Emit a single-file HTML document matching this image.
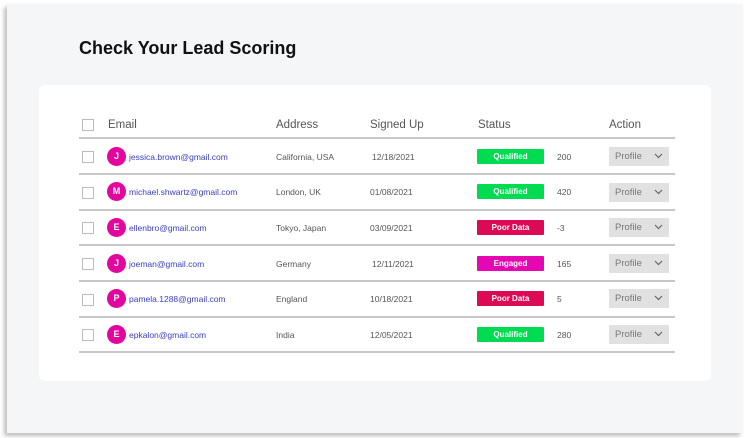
<!DOCTYPE html>
<html><head><style>
*{margin:0;padding:0;box-sizing:border-box}
body{width:750px;height:438px;background:#fff;position:relative;overflow:hidden;font-family:"Liberation Sans",sans-serif}
.panel{position:absolute;left:7px;top:4px;width:736px;height:429px;background:#f5f6f8;box-shadow:-3px 3px 4px rgba(0,0,0,.25)}
h1{position:absolute;left:79px;top:38px;font-size:18px;font-weight:bold;color:#111}
.card{position:absolute;left:39px;top:85px;width:672px;height:296px;background:#fff;border-radius:6px}
.line{position:absolute;left:79px;width:596px;height:2px;background:#c8c8c8}
.cb{position:absolute;left:82px;width:12px;height:12px;border:1px solid #bbb;background:#fff}
.hd{position:absolute;top:119px;font-size:11.5px;color:#555}
.av{position:absolute;left:107px;width:19px;height:19px;border-radius:50%;background:#e3069e;color:#fff;font-size:9px;font-weight:bold;text-align:center;line-height:19px}
.em{position:absolute;left:129px;font-size:8.5px;color:#3a3fc0}
.tx{position:absolute;font-size:8.5px;color:#555}
.bd{position:absolute;left:477px;width:67px;height:15px;color:#fff;font-size:8px;font-weight:bold;text-align:center;line-height:15px;border-radius:1px}
.pf{position:absolute;left:609px;width:60px;height:19px;background:#e1e1e1;font-size:9.5px;color:#777;line-height:19px;padding-left:6px}
.pf svg{position:absolute;right:6px;top:6px}
</style></head><body>
<div class="panel"></div>
<h1>Check Your Lead Scoring</h1>
<div class="card"></div>
<div class="cb" style="top:119px"></div>
<div class="hd" style="left:108px">Email</div>
<div class="hd" style="left:276px">Address</div>
<div class="hd" style="left:370px">Signed Up</div>
<div class="hd" style="left:478px">Status</div>
<div class="hd" style="left:609px">Action</div>
<div class="line" style="top:137px"></div>

<div class="cb" style="top:151px"></div><div class="av" style="top:147px">J</div><div class="em" style="top:152px">jessica.brown@gmail.com</div><div class="tx" style="left:276px;top:152px">California, USA</div><div class="tx" style="left:372px;top:152px">12/18/2021</div><div class="bd" style="top:149px;background:#00dc52">Qualified</div><div class="tx" style="left:557px;top:152px">200</div><div class="pf" style="top:147px">Profile<svg width="9" height="6"><path d="M1 1L4.5 4.5L8 1" stroke="#666" stroke-width="1.2" fill="none"/></svg></div>
<div class="line" style="top:173px"></div>

<div class="cb" style="top:187px"></div><div class="av" style="top:182px">M</div><div class="em" style="top:187px">michael.shwartz@gmail.com</div><div class="tx" style="left:276px;top:187px">London, UK</div><div class="tx" style="left:370px;top:187px">01/08/2021</div><div class="bd" style="top:184px;background:#00dc52">Qualified</div><div class="tx" style="left:557px;top:187px">420</div><div class="pf" style="top:183px">Profile<svg width="9" height="6"><path d="M1 1L4.5 4.5L8 1" stroke="#666" stroke-width="1.2" fill="none"/></svg></div>
<div class="line" style="top:209px"></div>

<div class="cb" style="top:222px"></div><div class="av" style="top:218px">E</div><div class="em" style="top:223px">ellenbro@gmail.com</div><div class="tx" style="left:276px;top:223px">Tokyo, Japan</div><div class="tx" style="left:370px;top:223px">03/09/2021</div><div class="bd" style="top:220px;background:#dc0a55">Poor Data</div><div class="tx" style="left:557px;top:223px">-3</div><div class="pf" style="top:218px">Profile<svg width="9" height="6"><path d="M1 1L4.5 4.5L8 1" stroke="#666" stroke-width="1.2" fill="none"/></svg></div>
<div class="line" style="top:244px"></div>

<div class="cb" style="top:258px"></div><div class="av" style="top:254px">J</div><div class="em" style="top:259px">joeman@gmail.com</div><div class="tx" style="left:276px;top:259px">Germany</div><div class="tx" style="left:372px;top:259px">12/11/2021</div><div class="bd" style="top:256px;background:#e507b2">Engaged</div><div class="tx" style="left:557px;top:259px">165</div><div class="pf" style="top:254px">Profile<svg width="9" height="6"><path d="M1 1L4.5 4.5L8 1" stroke="#666" stroke-width="1.2" fill="none"/></svg></div>
<div class="line" style="top:280px"></div>

<div class="cb" style="top:294px"></div><div class="av" style="top:289px">P</div><div class="em" style="top:294px">pamela.1288@gmail.com</div><div class="tx" style="left:276px;top:294px">England</div><div class="tx" style="left:370px;top:294px">10/18/2021</div><div class="bd" style="top:291px;background:#dc0a55">Poor Data</div><div class="tx" style="left:557px;top:294px">5</div><div class="pf" style="top:289px">Profile<svg width="9" height="6"><path d="M1 1L4.5 4.5L8 1" stroke="#666" stroke-width="1.2" fill="none"/></svg></div>
<div class="line" style="top:316px"></div>

<div class="cb" style="top:329px"></div><div class="av" style="top:325px">E</div><div class="em" style="top:330px">epkalon@gmail.com</div><div class="tx" style="left:276px;top:330px">India</div><div class="tx" style="left:370px;top:330px">12/05/2021</div><div class="bd" style="top:327px;background:#00dc52">Qualified</div><div class="tx" style="left:557px;top:330px">280</div><div class="pf" style="top:325px">Profile<svg width="9" height="6"><path d="M1 1L4.5 4.5L8 1" stroke="#666" stroke-width="1.2" fill="none"/></svg></div>
<div class="line" style="top:351px"></div>
</body></html>
